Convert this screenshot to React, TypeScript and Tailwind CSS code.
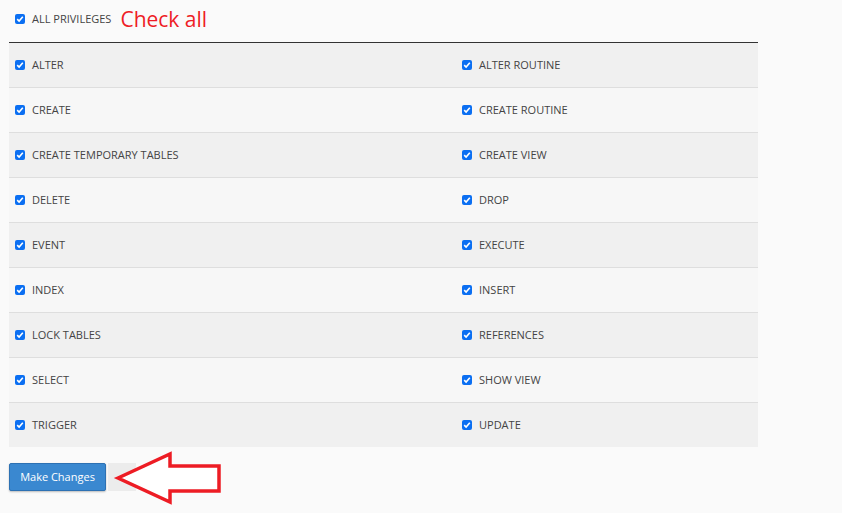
const privileges: [string, string][] = [
  ["ALTER", "ALTER ROUTINE"],
  ["CREATE", "CREATE ROUTINE"],
  ["CREATE TEMPORARY TABLES", "CREATE VIEW"],
  ["DELETE", "DROP"],
  ["EVENT", "EXECUTE"],
  ["INDEX", "INSERT"],
  ["LOCK TABLES", "REFERENCES"],
  ["SELECT", "SHOW VIEW"],
  ["TRIGGER", "UPDATE"],
];

function Check() {
  return (
    <span className="w-[10px] h-[10px] rounded-[2px] bg-[#0b6ff2] flex items-center justify-center shrink-0">
      <svg width="8" height="8" viewBox="0 0 8 8">
        <path d="M1.2 4.2 L3.1 6 L6.8 1.8" fill="none" stroke="white" strokeWidth="1.6" />
      </svg>
    </span>
  );
}

function Item({ label }: { label: string }) {
  return (
    <label className="flex items-center gap-[7px] pl-[6px]">
      <Check />
      <span className="text-[11px] text-[#444]">{label}</span>
    </label>
  );
}

export default function App() {
  return (
    <div className="w-[842px] h-[513px] bg-[#fafafa] pl-[9px] overflow-hidden" style={{ fontFamily: "'Open Sans', 'Liberation Sans', sans-serif" }}>
      <div className="w-[749px]">
        <div className="h-[43px] flex items-center pb-[4px] border-b border-[#333]">
          <Item label="ALL PRIVILEGES" />
          <span className="ml-[9px] text-[21px] text-[#ee1c25] leading-none">Check all</span>
        </div>
        {privileges.map(([a, b], i) => (
          <div
            key={a}
            className={`grid grid-cols-[447px_1fr] items-center ${i > 0 ? "h-[45px] border-t border-[#dedede]" : "h-[44px]"} ${i % 2 === 0 ? "bg-[#f0f0f0]" : "bg-[#f7f7f7]"}`}
          >
            <Item label={a} />
            <Item label={b} />
          </div>
        ))}
      </div>

      <div className="relative mt-[16px] flex items-center">
        <button className="h-[28px] w-[97px] bg-[#3a88d0] border border-[#2d71b3] rounded-[2px] text-white text-[11px] shadow-[0_1px_2px_rgba(0,0,0,0.25)]">
          Make Changes
        </button>
        <div className="ml-[2px] h-[28px] w-[28px] bg-[#ececec]" />
        <svg className="absolute left-[98px] top-[-12px]" width="116" height="54" viewBox="107 451 116 54">
          <polygon
            points="118,478 170,454 170,466 219,466 219,491 170,491 170,502"
            fill="white"
            stroke="#ed1c24"
            strokeWidth="3.5"
            strokeLinejoin="miter"
          />
        </svg>
      </div>
    </div>
  );
}
